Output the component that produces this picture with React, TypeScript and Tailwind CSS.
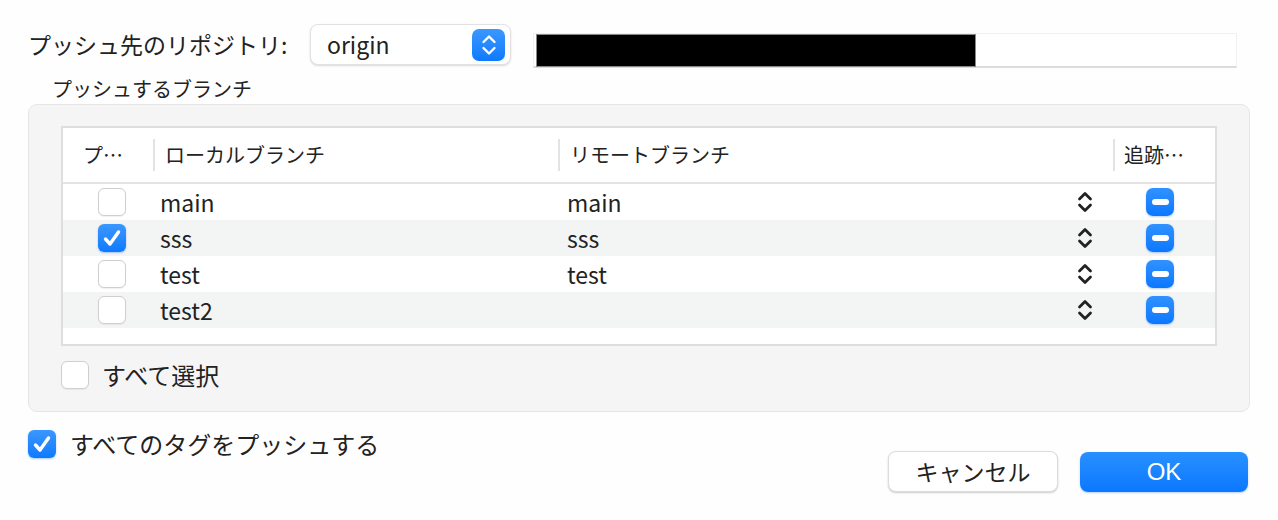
import React from "react";

const font = { fontFamily: '"Noto Sans CJK JP", "Noto Sans", sans-serif' };

const Check = ({ checked }: { checked: boolean }) =>
  checked ? (
    <div className="w-[28px] h-[28px] rounded-[6px] bg-gradient-to-b from-[#3a97ff] to-[#0a7aff] flex items-center justify-center shadow-[0_1px_2px_rgba(0,100,255,0.35)]">
      <svg width="22" height="22" viewBox="0 0 22 22">
        <path d="M4.5 12 L9 17 L17.5 5" fill="none" stroke="white" strokeWidth="3.4" strokeLinecap="round" strokeLinejoin="round" />
      </svg>
    </div>
  ) : (
    <div className="w-[28px] h-[28px] rounded-[6px] bg-white border border-[#cfcfcf] shadow-[0_1px_1px_rgba(0,0,0,0.06)]" />
  );

const Chevrons = ({ color, w = 2.8 }: { color: string; w?: number }) => (
  <svg width="18" height="24" viewBox="0 0 18 24">
    <path d="M3.5 9 L9 3.5 L14.5 9" fill="none" stroke={color} strokeWidth={w} strokeLinecap="round" strokeLinejoin="round" />
    <path d="M3.5 15 L9 20.5 L14.5 15" fill="none" stroke={color} strokeWidth={w} strokeLinecap="round" strokeLinejoin="round" />
  </svg>
);

const Minus = () => (
  <div className="w-[28px] h-[28px] rounded-[7px] bg-gradient-to-b from-[#2f92ff] to-[#0a78ff] flex items-center justify-center shadow-[0_1px_2px_rgba(0,100,255,0.3)]">
    <div className="w-[17px] h-[6px] rounded-full bg-white" />
  </div>
);

const rows = [
  { local: "main", remote: "main", push: false },
  { local: "sss", remote: "sss", push: true },
  { local: "test", remote: "test", push: false },
  { local: "test2", remote: "", push: false },
];

export default function App() {
  return (
    <div className="w-[1278px] h-[520px] bg-[#fefefe] text-[#222] relative overflow-hidden" style={font}>
      {/* Repository row */}
      <div className="flex items-start pt-[24px] pl-[28px]">
        <div className="w-[282px] h-[41px] flex items-center text-[23px] leading-none">プッシュ先のリポジトリ:</div>
        <div className="w-[201px] h-[41px] rounded-[8px] bg-white border border-[#e2e2e2] shadow-[0_1px_2px_rgba(0,0,0,0.15)] flex items-center justify-between pl-[16px] pr-[5px]">
          <span className="text-[23px] leading-none">origin</span>
          <div className="w-[33px] h-[32px] rounded-[7px] bg-gradient-to-b from-[#3a97ff] to-[#0a7aff] flex items-center justify-center">
            <Chevrons color="white" w={2.4} />
          </div>
        </div>
        <div className="ml-[22px] mt-[9px] w-[704px] h-[35px] bg-white border border-[#f0f0f0] border-b-[#dcdcdc] border-b-2 flex items-start pl-[2px]">
          <div className="w-[440px] h-[33px] bg-black border border-[#888]" />
        </div>
      </div>

      <div className="pl-[52px] mt-[11px] text-[20px] leading-none">プッシュするブランチ</div>

      {/* Branch panel */}
      <div className="mx-[28px] mt-[5px] h-[308px] rounded-[9px] bg-[#f5f5f5] border border-[#e6e6e6] px-[32px] pt-[21px]">
        <div className="h-[220px] bg-white border-2 border-[#dedede]">
          <div className="h-[56px] flex items-center border-b-2 border-[#e3e3e3] text-[20px]">
            <div className="w-[90px] pl-[20px]">プ…</div>
            <div className="w-[2px] h-[32px] bg-[#e3e3e3]" />
            <div className="w-[403px] pl-[10px]">ローカルブランチ</div>
            <div className="w-[2px] h-[32px] bg-[#e3e3e3]" />
            <div className="w-[553px] pl-[10px]">リモートブランチ</div>
            <div className="w-[2px] h-[32px] bg-[#e3e3e3]" />
            <div className="pl-[9px]">追跡…</div>
          </div>
          {rows.map((r, i) => (
            <div key={r.local} className={`h-[36px] flex items-center text-[23px] ${i % 2 === 1 ? "bg-[#f3f4f4]" : "bg-white"}`}>
              <div className="w-[97px] pl-[35px]">
                <Check checked={r.push} />
              </div>
              <div className="w-[407px] leading-none">{r.local}</div>
              <div className="w-[509px] leading-none">{r.remote}</div>
              <div className="w-[70px] flex items-center">
                <Chevrons color="#222" />
              </div>
              <Minus />
            </div>
          ))}
        </div>
        <div className="flex items-center mt-[15px]">
          <Check checked={false} />
          <span className="ml-[13px] text-[24px] leading-none">すべて選択</span>
        </div>
      </div>

      {/* Footer */}
      <div className="flex pl-[28px] pr-[30px] mt-[17px]">
        <div className="flex items-center h-[30px]">
          <Check checked={true} />
          <span className="ml-[14px] text-[24px] leading-none">すべてのタグをプッシュする</span>
        </div>
        <div className="ml-auto flex items-center gap-[22px] mt-[22px]">
          <button className="w-[170px] h-[41px] rounded-[8px] bg-white border border-[#dcdcdc] shadow-[0_1px_2px_rgba(0,0,0,0.2)] text-[23px] leading-none">キャンセル</button>
          <button className="w-[168px] h-[40px] rounded-[8px] bg-gradient-to-b from-[#2790ff] to-[#0a78ff] text-white text-[24px] leading-none shadow-[0_1px_2px_rgba(0,100,255,0.3)]" style={{ fontFamily: '"Liberation Sans", sans-serif' }}>OK</button>
        </div>
      </div>
    </div>
  );
}
